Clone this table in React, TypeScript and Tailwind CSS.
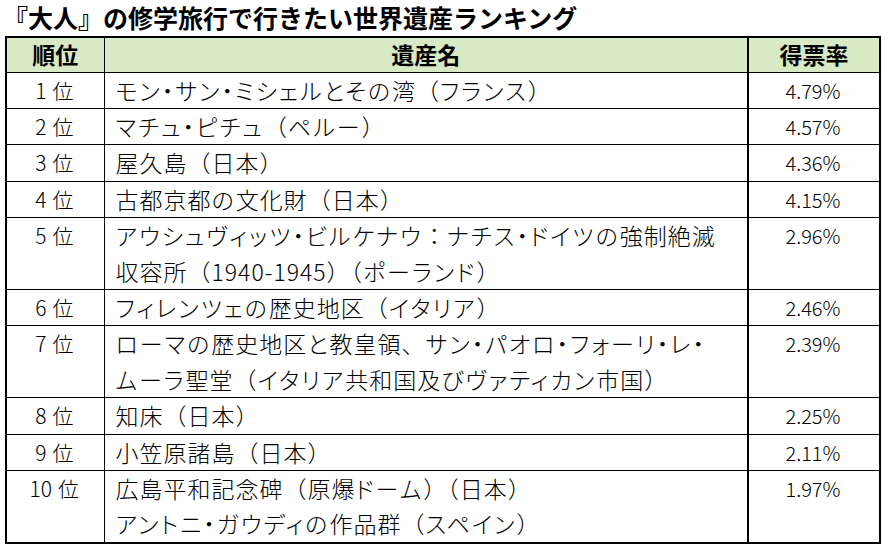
import React from "react";

const rows: { rank: string; name: string[]; rate: string }[] = [
  { rank: "1 位", name: ["モン・サン・ミシェルとその湾（フランス）"], rate: "4.79%" },
  { rank: "2 位", name: ["マチュ・ピチュ（ペルー）"], rate: "4.57%" },
  { rank: "3 位", name: ["屋久島（日本）"], rate: "4.36%" },
  { rank: "4 位", name: ["古都京都の文化財（日本）"], rate: "4.15%" },
  {
    rank: "5 位",
    name: ["アウシュヴィッツ・ビルケナウ：ナチス・ドイツの強制絶滅", "収容所（1940-1945）（ポーランド）"],
    rate: "2.96%",
  },
  { rank: "6 位", name: ["フィレンツェの歴史地区（イタリア）"], rate: "2.46%" },
  {
    rank: "7 位",
    name: ["ローマの歴史地区と教皇領、サン・パオロ・フォーリ・レ・", "ムーラ聖堂（イタリア共和国及びヴァティカン市国）"],
    rate: "2.39%",
  },
  { rank: "8 位", name: ["知床（日本）"], rate: "2.25%" },
  { rank: "9 位", name: ["小笠原諸島（日本）"], rate: "2.11%" },
  {
    rank: "10 位",
    name: ["広島平和記念碑（原爆ドーム）（日本）", "アントニ・ガウディの作品群（スペイン）"],
    rate: "1.97%",
  },
];

function Name({ text }: { text: string }) {
  const parts = text.split(/([\u3040-\u30FF]+)/);
  return (
    <div>
      {parts.map((p, i) =>
        /^[\u3040-\u30FF]+$/.test(p) ? (
          <span key={i} className="[font-feature-settings:'palt'] tracking-[2px]">
            {p}
          </span>
        ) : (
          <React.Fragment key={i}>{p}</React.Fragment>
        )
      )}
    </div>
  );
}

export default function App() {
  return (
    <div
      className="w-[888px] h-[550px] bg-white text-black overflow-hidden"
      style={{ fontFamily: '"Noto Sans CJK JP", "Noto Sans", sans-serif' }}
    >
      <div className="pl-[3px] pt-[1px] h-[36px] text-[25px] font-bold leading-[32px] whitespace-nowrap">
        『大人』の修学旅行で行きたい世界遺産ランキング
      </div>
      <table className="ml-[5px] w-[874px] border-collapse border-2 border-black table-fixed">
        <colgroup>
          <col className="w-[98px]" />
          <col className="w-[644px]" />
          <col className="w-[132px]" />
        </colgroup>
        <thead>
          <tr className="bg-[#d7eac5] h-[35px]">
            <th className="border border-black text-[23px] font-bold leading-[33px] p-0">順位</th>
            <th className="border border-black border-r-2 text-[23px] font-bold leading-[33px] p-0">遺産名</th>
            <th className="border border-black text-[23px] font-bold leading-[33px] p-0">得票率</th>
          </tr>
        </thead>
        <tbody>
          {rows.map((r) => (
            <tr key={r.rank}>
              <td className="border border-black text-center align-top text-[21px] font-light leading-[35.4px] p-0 pr-[2px] whitespace-nowrap">
                {r.rank.split(" ")[0]}
                <span className="inline-block w-[6px]" />
                {r.rank.split(" ")[1]}
              </td>
              <td className="border border-black border-r-2 align-top text-[23px] font-light leading-[35.4px] p-0 pl-[11px] whitespace-nowrap tracking-[1px]">
                {r.name.map((n) => (
                  <Name key={n} text={n} />
                ))}
              </td>
              <td className="border border-black text-center align-top text-[20px] font-light leading-[35.4px] p-0 pr-[2px]">
                {r.rate}
              </td>
            </tr>
          ))}
        </tbody>
      </table>
    </div>
  );
}
